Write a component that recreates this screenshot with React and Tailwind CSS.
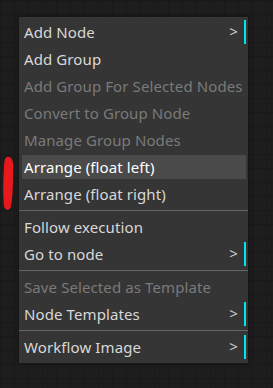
import { Fragment } from "react";

const items = [
  { label: "Add Node", sub: true },
  { label: "Add Group" },
  { label: "Add Group For Selected Nodes", disabled: true },
  { label: "Convert to Group Node", disabled: true },
  { label: "Manage Group Nodes", disabled: true },
  { label: "Arrange (float left)", hover: true },
  { label: "Arrange (float right)" },
  { sep: true },
  { label: "Follow execution" },
  { label: "Go to node", sub: true },
  { sep: true },
  { label: "Save Selected as Template", disabled: true },
  { label: "Node Templates", sub: true },
  { sep: true },
  { label: "Workflow Image", sub: true },
];

const MenuEntry = ({ item }) => {
  if (item.sep) {
    return <div className="mt-[2px] mb-[4px] h-[2px] border-t border-[#333] border-b border-b-[#666]" />;
  }
  let color = "text-[#d8d8d8]";
  if (item.disabled) color = "text-[#7a7a7a]";
  if (item.hover) color = "text-white";
  return (
    <div
      className={
        "relative mx-[3px] mr-[2px] mb-[3px] h-6 pl-[2px] flex items-center text-[15px] leading-none tracking-[0.1px] " +
        color +
        (item.hover ? " bg-[#4a4a4a]" : "") +
        (item.sub ? " border-r-2 border-[#00e5f0]" : "")
      }
    >
      <span className="whitespace-nowrap">{item.label}</span>
      {item.sub && <span className="absolute right-[6px] top-[4px] text-[#d0d0d0] text-[15px]">&gt;</span>}
    </div>
  );
};

export default function App() {
  return (
    <div
      className="relative w-[273px] h-[388px] overflow-hidden bg-[#1d1d1d] bg-[linear-gradient(#191919_1px,transparent_1px),linear-gradient(90deg,#191919_1px,transparent_1px)] bg-[size:14px_14px]"
      style={{ fontFamily: '"Noto Sans", "Open Sans", sans-serif' }}
    >
      <div className="absolute left-[19px] top-[17px] w-[229px] bg-[#353535] pt-[3px] pb-[1px] shadow-[0_0_4px_rgba(0,0,0,0.5)]">
        {items.map((it, i) => (
          <Fragment key={i}>
            <MenuEntry item={it} />
          </Fragment>
        ))}
      </div>
      <svg className="absolute left-[2px] top-[156px]" width="13" height="56" viewBox="0 0 13 56">
        <path d="M5 1 C9 0 12 4 11 14 C11 26 11 40 9 50 C8 55 3 55 2 50 C1 40 1 26 2 12 C2 5 3 2 5 1 Z" fill="#e8191c" />
      </svg>
    </div>
  );
}
